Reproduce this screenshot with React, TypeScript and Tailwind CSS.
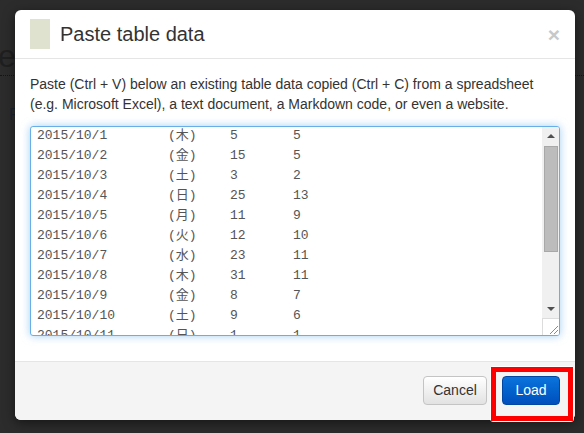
import React from "react";

const rows = [
  ["2015/10/1", "(木)", "5", "5"],
  ["2015/10/2", "(金)", "15", "5"],
  ["2015/10/3", "(土)", "3", "2"],
  ["2015/10/4", "(日)", "25", "13"],
  ["2015/10/5", "(月)", "11", "9"],
  ["2015/10/6", "(火)", "12", "10"],
  ["2015/10/7", "(水)", "23", "11"],
  ["2015/10/8", "(木)", "31", "11"],
  ["2015/10/9", "(金)", "8", "7"],
  ["2015/10/10", "(土)", "9", "6"],
  ["2015/10/11", "(日)", "1", "1"],
];

function ScrollBar() {
  return (
    <div className="flex w-[17px] flex-col bg-[#f0f0f0]">
      <div className="flex h-[17px] items-center justify-center">
        <svg width="8" height="5" viewBox="0 0 8 5">
          <path d="M0 5 L4 1 L8 5 Z" fill="#505050" />
        </svg>
      </div>
      <div className="flex-1 pl-[2px] pr-[1px] pt-[2px]">
        <div className="h-[106px] border border-[#a8a8a8] bg-[#bcbcbc]" />
      </div>
      <div className="flex h-[17px] items-center justify-center">
        <svg width="8" height="5" viewBox="0 0 8 5">
          <path d="M0 0 L4 4 L8 0 Z" fill="#505050" />
        </svg>
      </div>
      <div className="h-[17px] border-l border-t border-[#dcdcdc] bg-white">
        <svg width="16" height="16" viewBox="0 0 16 16">
          <path d="M7 15 L15 7 M11 15 L15 11" stroke="#8a8a8a" strokeWidth="1" />
        </svg>
      </div>
    </div>
  );
}

export default function App() {
  return (
    <div className="relative h-[433px] w-[584px] overflow-hidden bg-[#2c2c2c] font-['Liberation_Sans',Arial,sans-serif]">
      {/* page behind the overlay */}
      <div className="absolute left-[-2px] top-[40px] text-[32px] leading-[32px] text-[#1f1f1f]">er</div>
      <div className="absolute left-0 top-[75px] h-px w-full border-t border-dotted border-[#151515]" />
      <div className="absolute left-[9px] top-[103px] text-[16px] text-[#1b2430]">F</div>

      {/* modal */}
      <div className="absolute left-[15px] top-[10px] w-[560px] overflow-hidden rounded-[6px] bg-white shadow-[0_3px_12px_rgba(0,0,0,0.5)]">
        <div className="flex h-[49px] items-center border-b border-[#e5e5e5] px-[15px]">
          <div className="h-[30px] w-[20px] bg-[#dfe2cf]" />
          <h4 className="ml-[10px] text-[20px] leading-[24px] text-[#333]">Paste table data</h4>
          <span className="ml-auto text-[21px] font-bold leading-none text-[#c8c8c8]">×</span>
        </div>

        <div className="px-[15px] pb-[25px] pt-[15px]">
          <p className="mb-[12px] text-[14px] leading-[20px] text-[#333]">
            Paste (Ctrl + V) below an existing table data copied (Ctrl + C) from a spreadsheet
            <br />
            (e.g. Microsoft Excel), a text document, a Markdown code, or even a website.
          </p>

          <div className="flex h-[210px] overflow-hidden rounded-[3px] border border-[#66afe9] bg-white shadow-[0_0_8px_rgba(102,175,233,0.6)]">
            <div className="-mt-[1px] flex-1 overflow-hidden pl-[6px] font-['Liberation_Mono','Noto_Sans_CJK_JP',monospace] text-[13px] leading-[20px] text-[#555]">
              {rows.map((r) => (
                <div key={r[0]} className="grid grid-cols-[131px_62px_63px_1fr]">
                  <span>{r[0]}</span>
                  <span>{r[1]}</span>
                  <span>{r[2]}</span>
                  <span>{r[3]}</span>
                </div>
              ))}
            </div>
            <ScrollBar />
          </div>
        </div>

        <div className="flex h-[59px] items-start justify-end gap-[15px] border-t border-[#e5e5e5] bg-[#f4f4f4] px-[15px] pt-[14px]">
          <button className="h-[29px] w-[64px] rounded-[4px] border border-[#c4c4c4] bg-gradient-to-b from-white to-[#e2e2e2] text-[14px] text-[#333]">
            Cancel
          </button>
          <button className="h-[29px] w-[58px] rounded-[4px] border border-[#0047a3] bg-gradient-to-b from-[#0c74dc] to-[#004fbd] text-[14px] text-white">
            Load
          </button>
        </div>
      </div>

      {/* highlight */}
      <div className="absolute left-[490px] top-[366px] h-[56px] w-[84px] rounded-[3px] border border-white">
        <div className="h-full w-full border-[5px] border-[#ff0000]" />
      </div>
    </div>
  );
}
